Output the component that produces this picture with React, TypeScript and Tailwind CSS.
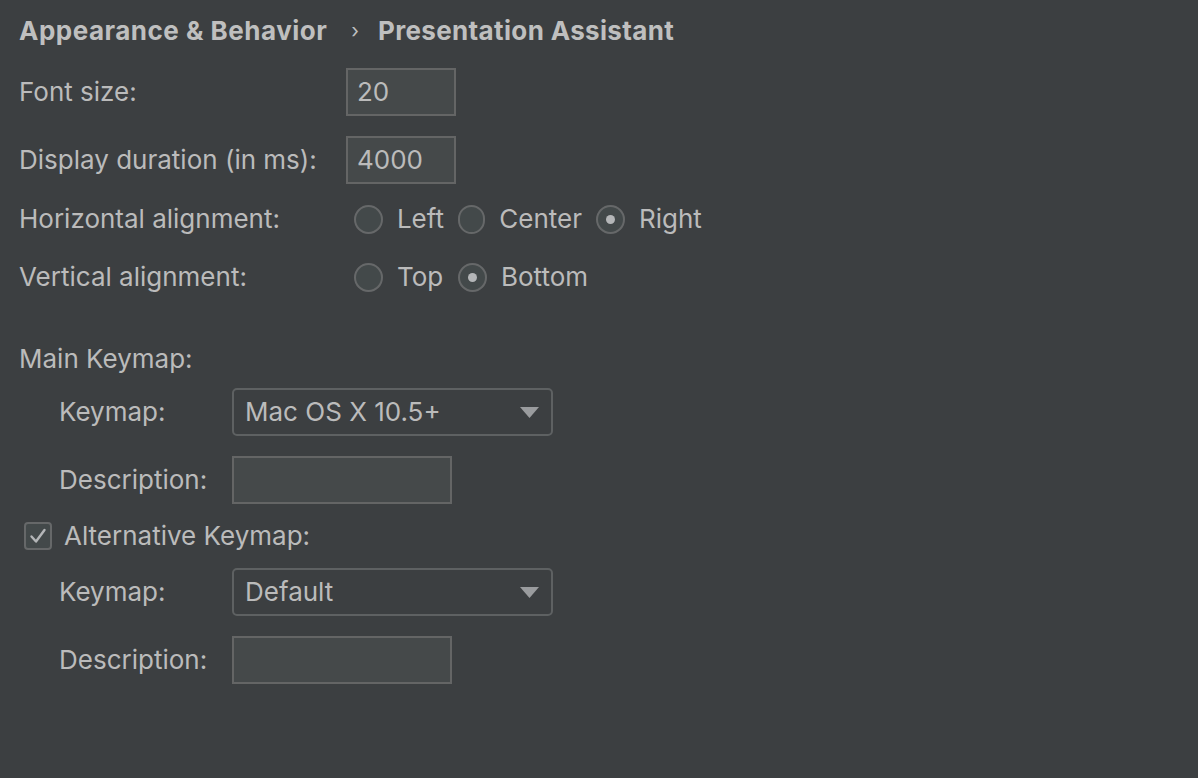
import React from "react";

const font = { fontFamily: "Inter, 'Noto Sans', sans-serif" };

function Radio({ checked, label, w }: { checked?: boolean; label: string; w?: string }) {
  return (
    <div className={"flex items-center " + (w ?? "")}>
      <div className="w-[29px] h-[29px] rounded-full border-2 border-[#666869] bg-[#43494a] flex items-center justify-center">
        {checked && <div className="w-[9px] h-[9px] rounded-full bg-[#b4b6b8]" />}
      </div>
      <span className="ml-[14px] mr-[14px]">{label}</span>
    </div>
  );
}

function Dropdown({ value }: { value: string }) {
  return (
    <div className="w-[321px] h-[48px] rounded-[5px] border-2 border-[#5e6162] bg-[#3c3f41] flex items-center justify-between pl-[11px] pr-[12px]">
      <span>{value}</span>
      <svg width="19" height="11" viewBox="0 0 19 11">
        <polygon points="0,0 19,0 9.5,11" fill="#9a9c9e" />
      </svg>
    </div>
  );
}

function TextBox({ value, width }: { value?: string; width: number }) {
  return (
    <div
      className="h-[48px] border-2 border-[#646565] bg-[#45494a] flex items-center pl-[9px]"
      style={{ width }}
    >
      {value}
    </div>
  );
}

export default function App() {
  return (
    <div
      className="w-[1198px] h-[778px] bg-[#3c3f41] text-[#bbbbbb] text-[26px] leading-none overflow-hidden pl-[19px]"
      style={font}
    >
      <div className="h-[62px] flex items-center font-bold text-[#bfbfbf]">
        <span className="tracking-[0.5px]">Appearance &amp; Behavior</span>
        <span className="ml-[24px] mr-[19px] text-[20px] font-normal">›</span>
        <span className="tracking-[0.35px]">Presentation Assistant</span>
      </div>

      <div className="mt-[6px] flex items-center h-[48px]">
        <div className="w-[327px]">Font size:</div>
        <TextBox value="20" width={110} />
      </div>

      <div className="mt-[20px] flex items-center h-[48px]">
        <div className="w-[327px]">Display duration (in ms):</div>
        <TextBox value="4000" width={110} />
      </div>

      <div className="mt-[21px] flex items-center h-[28px]">
        <div className="w-[335px]">Horizontal alignment:</div>
        <Radio label="Left" w="w-[104px]" />
        <Radio label="Center" w="w-[138px]" />
        <Radio label="Right" checked />
      </div>

      <div className="mt-[30px] flex items-center h-[28px]">
        <div className="w-[335px]">Vertical alignment:</div>
        <Radio label="Top" w="w-[104px]" />
        <Radio label="Bottom" checked />
      </div>

      <div className="mt-[53px] h-[30px] flex items-center">Main Keymap:</div>

      <div className="mt-[14px] flex items-center h-[48px] pl-[40px]">
        <div className="w-[173px]">Keymap:</div>
        <Dropdown value="Mac OS X 10.5+" />
      </div>

      <div className="mt-[20px] flex items-center h-[48px] pl-[40px]">
        <div className="w-[173px]">Description:</div>
        <TextBox width={220} />
      </div>

      <div className="mt-[18px] flex items-center h-[28px] pl-[5px]">
        <div className="w-[28px] h-[28px] rounded-[4px] border-2 border-[#666869] bg-[#43494a] flex items-center justify-center">
          <svg width="18" height="16" viewBox="0 0 18 16">
            <path d="M2.5 8.5 L7 13.5 L15.5 2" fill="none" stroke="#b4b6b8" strokeWidth="2.4" strokeLinecap="round" strokeLinejoin="round" />
          </svg>
        </div>
        <span className="ml-[12px]">Alternative Keymap:</span>
      </div>

      <div className="mt-[18px] flex items-center h-[48px] pl-[40px]">
        <div className="w-[173px]">Keymap:</div>
        <Dropdown value="Default" />
      </div>

      <div className="mt-[20px] flex items-center h-[48px] pl-[40px]">
        <div className="w-[173px]">Description:</div>
        <TextBox width={220} />
      </div>
    </div>
  );
}
